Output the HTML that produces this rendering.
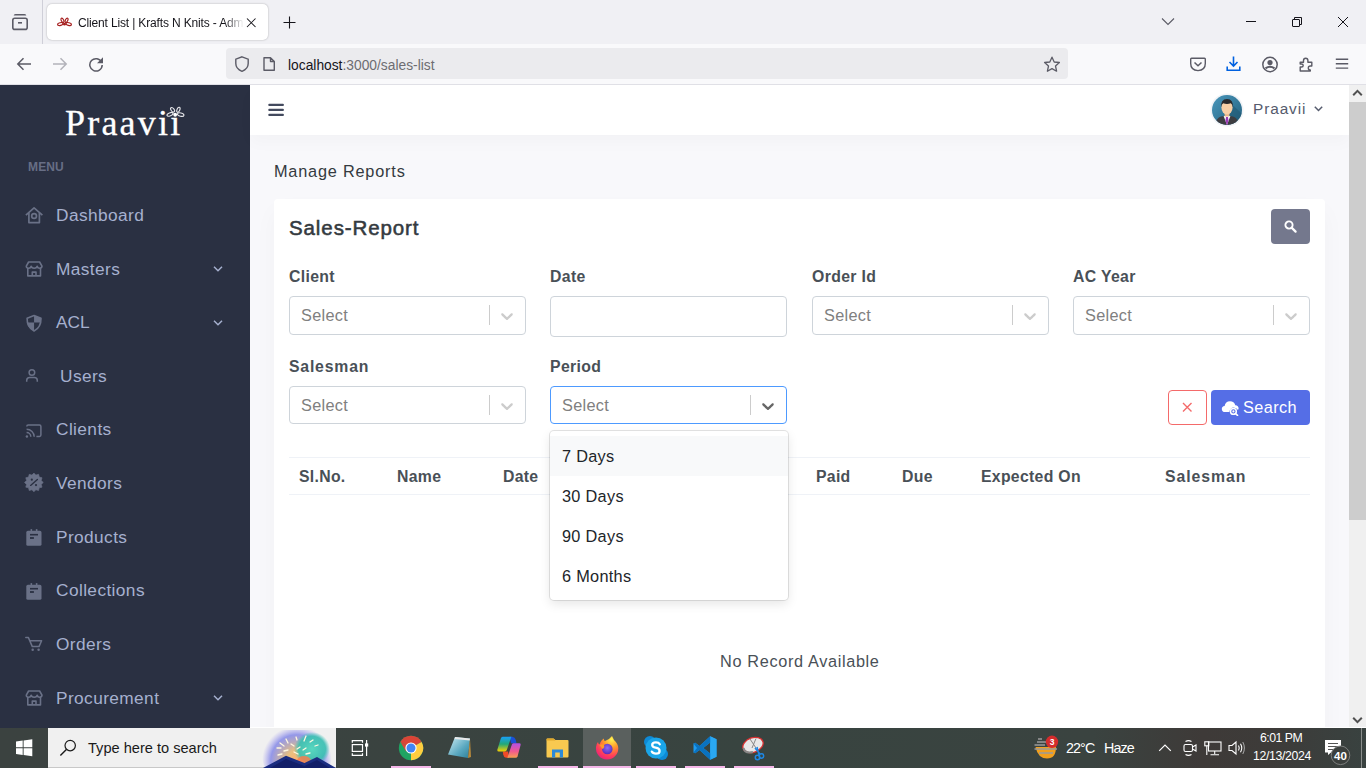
<!DOCTYPE html>
<html><head><meta charset="utf-8">
<style>
*{margin:0;padding:0;box-sizing:border-box}
html,body{width:1366px;height:768px;overflow:hidden;font-family:"Liberation Sans",sans-serif;background:#f8f8fb;position:relative}
.a{position:absolute}
#tabbar{left:0;top:0;width:1366px;height:44px;background:#f0f0f4}
#navbar{left:0;top:44px;width:1366px;height:41px;background:#f9f9fb;border-bottom:1px solid #e0e0e6}
#url{left:226px;top:48px;width:842px;height:31px;background:#ebebee;border-radius:4px}
#tab{left:47px;top:4px;width:221px;height:36px;background:#fff;border-radius:5px;box-shadow:0 0 2px rgba(0,0,0,.3)}
#sidebar{left:0;top:85px;width:250px;height:643px;background:#2a3042}
#header{left:250px;top:85px;width:1099px;height:50px;background:#fff;box-shadow:0 .5rem 1rem rgba(18,38,63,.025)}
#scroll{left:1349px;top:85px;width:17px;height:642px;background:#f0f0f0}
#thumb{left:1349px;top:102px;width:17px;height:418px;background:#cdcdcd}
#card{left:274px;top:199px;width:1051px;height:540px;background:#fff;border-radius:4px;box-shadow:0 .75rem 1.5rem rgba(18,38,63,.03)}
#taskbar{left:0;top:728px;width:1366px;height:40px;background:linear-gradient(90deg,#3b4240 0%,#3a4340 30%,#384440 55%,#3a4340 80%,#3e3a38 88%,#3d3b39 93%,#394240 100%)}
.mi{color:#a6b0cf;font-size:17.3px;left:56px;letter-spacing:.4px}
.lbl{color:#495057;font-size:15.8px;font-weight:bold;letter-spacing:.35px}
.sel{background:#fff;border:1px solid #ced4da;border-radius:4px;height:39px;width:237px}
.sel span{position:absolute;left:11px;top:9px;font-size:16.3px;color:#808080;letter-spacing:.3px}
.sel i{position:absolute;left:199px;top:8px;width:1px;height:20px;background:#cccccc}
.sel svg{position:absolute;left:207px;top:9px}
.foc{border-color:#4d9aff}
.th{font-size:15.8px;font-weight:bold;color:#495057;top:468px;letter-spacing:.3px}
.opt{left:562px;font-size:16.3px;color:#212529;letter-spacing:.3px}
</style></head><body>
<div id="tabbar" class="a"></div>
<div class="a" style="left:42px;top:0;width:1px;height:44px;background:#cfcfd8"></div>
<svg class="a" style="left:10px;top:12px" width="20" height="20" viewBox="0 0 20 20"><path d="M4.5 3.6Q4.5 2.8 5.5 2.8L14.5 2.8Q15.5 2.8 15.5 3.6" fill="none" stroke="#5b5b66" stroke-width="1.6"/><rect x="2.8" y="6.2" width="14.4" height="11.2" rx="2" fill="none" stroke="#5b5b66" stroke-width="1.6"/><path d="M8 10.8H12" stroke="#5b5b66" stroke-width="1.6"/></svg>
<div id="tab" class="a"></div>
<svg class="a" style="left:56px;top:17px" width="17" height="10" viewBox="0 0 18 12"><g fill="none" stroke="#a51d1d" stroke-width="1.4"><ellipse cx="4" cy="8.5" rx="3.3" ry="1.6" transform="rotate(-15 4 8.5)"/><ellipse cx="14" cy="8.5" rx="3.3" ry="1.6" transform="rotate(15 14 8.5)"/><ellipse cx="6.5" cy="4" rx="1.4" ry="2.8" transform="rotate(-25 6.5 4)"/><ellipse cx="11.5" cy="4" rx="1.4" ry="2.8" transform="rotate(25 11.5 4)"/></g><circle cx="9" cy="8.6" r="1.7" fill="#a51d1d"/></svg>
<div class="a" style="left:78px;top:16px;font-size:12px;color:#15141a;width:166px;overflow:hidden;white-space:nowrap;letter-spacing:-.15px;-webkit-mask-image:linear-gradient(90deg,#000 88%,transparent)">Client List | Krafts N Knits - Admin</div>
<svg class="a" style="left:245px;top:16px" width="12" height="12" viewBox="0 0 12 12"><path d="M2 2.5L10.5 11M10.5 2.5L2 11" stroke="#15141a" stroke-width="1.05"/></svg>
<svg class="a" style="left:282px;top:15px" width="15" height="15" viewBox="0 0 15 15"><path d="M7.5 1.5V13.5M1.5 7.5H13.5" stroke="#15141a" stroke-width="1.1"/></svg>
<svg class="a" style="left:1160px;top:16px" width="16" height="12" viewBox="0 0 16 12"><path d="M2 2.5L8 8.5L14 2.5" fill="none" stroke="#5b5b66" stroke-width="1.1"/></svg>
<div class="a" style="left:1246px;top:21px;width:10px;height:1px;background:#15141a"></div>
<svg class="a" style="left:1291px;top:16px" width="13" height="12" viewBox="0 0 13 12"><rect x="1.5" y="3.5" width="7" height="7" rx=".5" fill="none" stroke="#15141a" stroke-width="1"/><path d="M3.5 3.5V1.5H10.5V8.5H8.5" fill="none" stroke="#15141a" stroke-width="1"/></svg>
<svg class="a" style="left:1337px;top:16px" width="12" height="12" viewBox="0 0 12 12"><path d="M1 1L11 11M11 1L1 11" stroke="#15141a" stroke-width="1"/></svg>
<div id="navbar" class="a"></div>
<svg class="a" style="left:16px;top:56px" width="16" height="16" viewBox="0 0 16 16"><path d="M15 8H2.5M7.5 2.2L1.8 8L7.5 13.8" fill="none" stroke="#5b5b66" stroke-width="1.5"/></svg>
<svg class="a" style="left:52px;top:56px" width="16" height="16" viewBox="0 0 16 16"><path d="M1 8H13.5M8.5 2.2L14.2 8L8.5 13.8" fill="none" stroke="#b3b3ba" stroke-width="1.5"/></svg>
<svg class="a" style="left:88px;top:56px" width="16" height="16" viewBox="0 0 16 16"><path d="M13.6 6.2A6.2 6.2 0 1 0 14.2 9" fill="none" stroke="#5b5b66" stroke-width="1.5"/><path d="M15 1.2V7.2H9Z" fill="#5b5b66"/></svg>
<div id="url" class="a"></div>
<svg class="a" style="left:233px;top:55px" width="18" height="18" viewBox="0 0 18 18"><path d="M9 1.8L15.2 4.2V8.5Q15.2 13.8 9 16.3Q2.8 13.8 2.8 8.5V4.2Z" fill="none" stroke="#5b5b66" stroke-width="1.4"/></svg>
<svg class="a" style="left:261px;top:56px" width="16" height="16" viewBox="0 0 16 16"><path d="M3 1.7H9.5L13.3 5.5V14.3H3Z M9.5 1.7V5.5H13.3" fill="none" stroke="#5b5b66" stroke-width="1.4" stroke-linejoin="round"/></svg>
<div class="a" style="left:288px;top:58px;font-size:13.8px;color:#15141a">localhost<span style="color:#6d6d72">:3000/sales-list</span></div>
<svg class="a" style="left:1043px;top:56px" width="18" height="17" viewBox="0 0 18 17"><path d="M9 1.2L11.2 6L16.4 6.5L12.5 10L13.6 15.2L9 12.6L4.4 15.2L5.5 10L1.6 6.5L6.8 6Z" fill="none" stroke="#5b5b66" stroke-width="1.3" stroke-linejoin="round"/></svg>
<svg class="a" style="left:1189px;top:56px" width="18" height="16" viewBox="0 0 18 16"><path d="M2.5 2.2H15.5Q16.3 2.2 16.3 3V7.5Q16.3 14.2 9 14.6Q1.7 14.2 1.7 7.5V3Q1.7 2.2 2.5 2.2Z" fill="none" stroke="#5b5b66" stroke-width="1.4"/><path d="M5.5 6.5L9 9.8L12.5 6.5" fill="none" stroke="#5b5b66" stroke-width="1.5"/></svg>
<svg class="a" style="left:1225px;top:55px" width="17" height="17" viewBox="0 0 17 17"><path d="M8.5 1.5V11M4.5 7L8.5 11L12.5 7M2.2 11.5V15.2H14.8V11.5" fill="none" stroke="#0061e0" stroke-width="1.6"/></svg>
<svg class="a" style="left:1261px;top:56px" width="18" height="17" viewBox="0 0 18 17"><circle cx="9" cy="8.5" r="7.2" fill="none" stroke="#5b5b66" stroke-width="1.5"/><circle cx="9" cy="6.6" r="2.6" fill="#5b5b66"/><path d="M4.5 12.3Q9 9.2 13.5 12.3" fill="none" stroke="#5b5b66" stroke-width="2.2"/></svg>
<svg class="a" style="left:1298px;top:56px" width="17" height="17" viewBox="0 0 17 17"><path d="M2.2 6.2H5.5V4.5Q5.5 2.2 7.7 2.2Q9.9 2.2 9.9 4.5V6.2H13.8V10H12.3Q10.3 10 10.3 12T12.3 14V15H2.2V11H3.5Q5.2 11 5.2 9.5T3.5 8H2.2Z" fill="none" stroke="#5b5b66" stroke-width="1.4" stroke-linejoin="round"/></svg>
<svg class="a" style="left:1334px;top:56px" width="16" height="16" viewBox="0 0 16 16"><path d="M1.8 3.3H14.2M1.8 7.7H14.2M1.8 12.1H14.2" stroke="#5b5b66" stroke-width="1.4"/></svg>
<div id="sidebar" class="a"></div>
<div class="a" style="left:65px;top:102px;font-family:'Liberation Serif',serif;font-size:36px;color:#fff;letter-spacing:2.2px;-webkit-text-stroke:.3px #fff">Praavi<span style="position:relative">&#305;</span></div>
<svg class="a" style="left:150px;top:96px" width="45" height="45" viewBox="0 0 45 45"><g fill="none" stroke="#e6e6ea" stroke-width="1.1"><ellipse cx="22.6" cy="13.8" rx="1.5" ry="2.6" transform="rotate(-38 22.6 13.8)"/><ellipse cx="28.4" cy="13.8" rx="1.4" ry="2.7" transform="rotate(22 28.4 13.8)"/><ellipse cx="20" cy="18.3" rx="3.2" ry="1.5" transform="rotate(-22 20 18.3)"/><ellipse cx="30.7" cy="18.6" rx="3.3" ry="1.6" transform="rotate(12 30.7 18.6)"/></g><circle cx="25.2" cy="18.75" r="1.9" fill="#fff"/></svg>
<div class="a" style="left:28px;top:160px;font-size:12px;font-weight:bold;color:#676e85;letter-spacing:.15px">MENU</div>
<svg class="a" style="left:20px;top:200px" width="30" height="30" viewBox="0 0 30 30"><g fill="none" stroke="#6a7187" stroke-width="1.7" stroke-linejoin="round"><path d="M5.9 15.2L14.06 7.9L22.4 15.2"/><path d="M8.9 13V22.6H19.4V13"/><circle cx="14.1" cy="16" r="2.4"/></g></svg>
<svg class="a" style="left:20px;top:254px" width="30" height="30" viewBox="0 0 30 30"><g fill="none" stroke="#6a7187" stroke-width="1.6" stroke-linejoin="round"><path d="M8.6 8H19.6L22 12.2Q21.8 14.2 19.6 14.2Q17.4 14.2 17.2 12.2Q17 14.2 14.2 14.2Q11.4 14.2 11.2 12.2Q11 14.2 8.6 14.2Q6.4 14.2 6.3 12.2Z"/><path d="M7.8 14V21.9H20.5V14"/><path d="M12.3 21.9V18.1H16V21.9"/></g></svg>
<svg class="a" style="left:20px;top:308px" width="30" height="30" viewBox="0 0 30 30"><path d="M14.06 7.6L21 10.3Q21.2 19.5 14.06 23Q6.9 19.5 7.1 10.3Z" fill="none" stroke="#6a7187" stroke-width="1.6" stroke-linejoin="round"/><path d="M14.06 7.6L21 10.3Q21.1 12.5 20.9 14.6H14.06Z" fill="#6a7187"/><path d="M7.2 14.6H14.06V23Q7.3 19.5 7.2 14.6Z" fill="#6a7187"/></svg>
<svg class="a" style="left:20px;top:361px" width="30" height="30" viewBox="0 0 30 30"><g fill="none" stroke="#6a7187" stroke-width="1.5"><circle cx="11.9" cy="11.5" r="2.8"/><path d="M6.7 20.8V19.6Q6.7 16.6 9.7 16.6H14.3Q17.3 16.6 17.3 19.6V20.8"/></g></svg>
<svg class="a" style="left:20px;top:415px" width="30" height="30" viewBox="0 0 30 30"><g fill="none" stroke="#6a7187" stroke-width="1.5"><path d="M6.8 11.6V11.5Q6.8 10.1 8.2 10.1H19.5Q20.9 10.1 20.9 11.5V20Q20.9 21.4 19.5 21.4H16.4"/><path d="M6.6 14.2A7.6 7.6 0 0 1 14.2 21.8"/><path d="M6.6 17.6A4.2 4.2 0 0 1 10.8 21.8"/></g><circle cx="6.9" cy="21.5" r="1.2" fill="#6a7187"/></svg>
<svg class="a" style="left:20px;top:468px" width="30" height="30" viewBox="0 0 30 30"><polygon points="13.90,5.05 15.87,7.11 18.60,6.31 19.27,9.08 22.04,9.75 21.24,12.48 23.30,14.45 21.24,16.42 22.04,19.15 19.27,19.82 18.60,22.59 15.87,21.79 13.90,23.85 11.93,21.79 9.20,22.59 8.53,19.82 5.76,19.15 6.56,16.42 4.50,14.45 6.56,12.48 5.76,9.75 8.53,9.08 9.20,6.31 11.93,7.11" fill="#6a7187" stroke="#6a7187" stroke-width=".6" stroke-linejoin="round"/><path d="M10.6 17.4L17.4 11.4" stroke="#2a3042" stroke-width="1.3" stroke-linecap="round"/><circle cx="11.8" cy="11.7" r="1.1" fill="#2a3042"/><circle cx="16" cy="17.1" r="1.1" fill="#2a3042"/></svg>
<svg class="a" style="left:20px;top:522px" width="30" height="30" viewBox="0 0 30 30"><rect x="6.3" y="8.8" width="15.2" height="15" rx="1.6" fill="#6a7187"/><rect x="10.6" y="6.9" width="1.5" height="3" rx=".7" fill="#6a7187"/><rect x="15.9" y="6.9" width="1.5" height="3" rx=".7" fill="#6a7187"/><rect x="10" y="11.9" width="8" height="1.6" fill="#2a3042"/><rect x="10" y="15.1" width="3.9" height="1.8" fill="#2a3042"/></svg>
<svg class="a" style="left:20px;top:576px" width="30" height="30" viewBox="0 0 30 30"><rect x="6.3" y="8.8" width="15.2" height="15" rx="1.6" fill="#6a7187"/><rect x="10.6" y="6.9" width="1.5" height="3" rx=".7" fill="#6a7187"/><rect x="15.9" y="6.9" width="1.5" height="3" rx=".7" fill="#6a7187"/><rect x="10" y="11.9" width="8" height="1.6" fill="#2a3042"/><rect x="10" y="15.1" width="3.9" height="1.8" fill="#2a3042"/></svg>
<svg class="a" style="left:20px;top:629px" width="30" height="30" viewBox="0 0 30 30"><g fill="none" stroke="#6a7187" stroke-width="1.5" stroke-linejoin="round" stroke-linecap="round"><path d="M5.8 8.4H8.3L12.3 17.6H19L21.6 11.7H10.3"/></g><circle cx="12.7" cy="20.7" r="1.25" fill="#6a7187"/><circle cx="18.6" cy="20.7" r="1.25" fill="#6a7187"/></svg>
<svg class="a" style="left:20px;top:683px" width="30" height="30" viewBox="0 0 30 30"><g fill="none" stroke="#6a7187" stroke-width="1.6" stroke-linejoin="round"><path d="M8.6 8H19.6L22 12.2Q21.8 14.2 19.6 14.2Q17.4 14.2 17.2 12.2Q17 14.2 14.2 14.2Q11.4 14.2 11.2 12.2Q11 14.2 8.6 14.2Q6.4 14.2 6.3 12.2Z"/><path d="M7.8 14V21.9H20.5V14"/><path d="M12.3 21.9V18.1H16V21.9"/></g></svg>
<svg class="a" style="left:212px;top:265px" width="12" height="8" viewBox="0 0 12 8"><path d="M2 1.8L6 5.8L10 1.8" fill="none" stroke="#a6b0cf" stroke-width="1.5"/></svg>
<svg class="a" style="left:212px;top:319px" width="12" height="8" viewBox="0 0 12 8"><path d="M2 1.8L6 5.8L10 1.8" fill="none" stroke="#a6b0cf" stroke-width="1.5"/></svg>
<svg class="a" style="left:212px;top:694px" width="12" height="8" viewBox="0 0 12 8"><path d="M2 1.8L6 5.8L10 1.8" fill="none" stroke="#a6b0cf" stroke-width="1.5"/></svg>
<div class="a mi" style="top:205px">Dashboard</div>
<div class="a mi" style="top:259px">Masters</div>
<div class="a mi" style="top:312px;letter-spacing:0">ACL</div>
<div class="a mi" style="top:366px;left:60px">Users</div>
<div class="a mi" style="top:419px">Clients</div>
<div class="a mi" style="top:473px">Vendors</div>
<div class="a mi" style="top:527px">Products</div>
<div class="a mi" style="top:580px">Collections</div>
<div class="a mi" style="top:634px">Orders</div>
<div class="a mi" style="top:688px">Procurement</div>
<div id="header" class="a"></div>
<svg class="a" style="left:268px;top:102px" width="16" height="16" viewBox="0 0 16 16"><path d="M1.3 2.9H14.9M1.3 7.9H14.9M1.3 12.9H14.9" stroke="#434a5e" stroke-width="2.1" stroke-linecap="round"/></svg>
<svg class="a" style="left:1209px;top:92px" width="36" height="36" viewBox="0 0 36 36">
<defs><linearGradient id="av" x1="0" y1="0" x2="1" y2="1"><stop offset="0" stop-color="#4a98bd"/><stop offset="1" stop-color="#235f7c"/></linearGradient><clipPath id="avc"><circle cx="18" cy="18" r="15"/></clipPath></defs>
<circle cx="18" cy="18" r="16.6" fill="#f1f3f6"/>
<circle cx="18" cy="18" r="15" fill="url(#av)"/>
<g clip-path="url(#avc)">
<path d="M18 8 L40 28 L40 40 L22 40Z" fill="#1d546e" opacity=".5"/>
<path d="M5 38 Q6 26.5 12 24.6 L18 23.4 L24 24.6 Q30 26.5 31 38Z" fill="#3d3d41"/>
<path d="M14.6 24 L18 33 L21.4 24 Z" fill="#fff"/>
<path d="M17 25 H19 L19.5 28.5 L18 34 L16.5 28.5Z" fill="#9c3cb8"/>
<rect x="15.6" y="19.5" width="4.8" height="5" fill="#eab68a"/>
<ellipse cx="18" cy="15.6" rx="5.6" ry="6.8" fill="#f8cfa6"/>
<path d="M12.2 15.5 Q11.4 7 18 6.9 Q24.6 7 23.8 15.5 Q23.4 11.8 21.8 11.2 Q18 12.6 14.2 11.2 Q12.6 11.8 12.2 15.5Z" fill="#2a2a2d"/>
</g></svg>
<div class="a" style="left:1253px;top:100px;font-size:15.4px;color:#555b6d;letter-spacing:.9px">Praavii</div>
<svg class="a" style="left:1313px;top:105px" width="11" height="8" viewBox="0 0 11 8"><path d="M1.8 1.8L5.5 5.5L9.2 1.8" fill="none" stroke="#555b6d" stroke-width="1.5"/></svg>

<div class="a" style="left:274px;top:162px;font-size:16.3px;color:#343a40;letter-spacing:.8px">Manage Reports</div>

<div id="card" class="a"></div>
<div class="a" style="left:289px;top:216px;font-size:20.5px;color:#343a40;letter-spacing:.9px;-webkit-text-stroke:.55px #343a40">Sales-Report</div>
<div class="a" style="left:1271px;top:209px;width:39px;height:35px;background:#74788d;border-radius:4px"></div>
<svg class="a" style="left:1283px;top:219px" width="15" height="15" viewBox="0 0 15 15"><circle cx="6" cy="6" r="3.6" fill="none" stroke="#fff" stroke-width="1.9"/><path d="M8.6 8.6L12.6 12.6" stroke="#fff" stroke-width="2.2" stroke-linecap="round"/></svg>

<div class="a lbl" style="left:289px;top:268px">Client</div>
<div class="a lbl" style="left:550px;top:268px">Date</div>
<div class="a lbl" style="left:812px;top:268px">Order Id</div>
<div class="a lbl" style="left:1073px;top:268px">AC Year</div>
<div class="a lbl" style="left:289px;top:358px;letter-spacing:.8px">Salesman</div>
<div class="a lbl" style="left:550px;top:358px">Period</div>

<div class="a sel" style="left:289px;top:296px"><span>Select</span><i></i><svg width="20" height="20" viewBox="0 0 20 20"><path fill="#ccc" d="M4.516 7.548c0.436-0.446 1.043-0.481 1.576 0l3.908 3.747 3.908-3.747c0.533-0.481 1.141-0.446 1.574 0 0.436 0.445 0.408 1.197 0 1.615-0.406 0.418-4.695 4.502-4.695 4.502-0.217 0.223-0.502 0.335-0.787 0.335s-0.57-0.112-0.789-0.335c0 0-4.287-4.084-4.695-4.502s-0.436-1.17 0-1.615z"/></svg></div>
<div class="a sel" style="left:550px;top:296px;height:41px"></div>
<div class="a sel" style="left:812px;top:296px"><span>Select</span><i></i><svg width="20" height="20" viewBox="0 0 20 20"><path fill="#ccc" d="M4.516 7.548c0.436-0.446 1.043-0.481 1.576 0l3.908 3.747 3.908-3.747c0.533-0.481 1.141-0.446 1.574 0 0.436 0.445 0.408 1.197 0 1.615-0.406 0.418-4.695 4.502-4.695 4.502-0.217 0.223-0.502 0.335-0.787 0.335s-0.57-0.112-0.789-0.335c0 0-4.287-4.084-4.695-4.502s-0.436-1.17 0-1.615z"/></svg></div>
<div class="a sel" style="left:1073px;top:296px"><span>Select</span><i></i><svg width="20" height="20" viewBox="0 0 20 20"><path fill="#ccc" d="M4.516 7.548c0.436-0.446 1.043-0.481 1.576 0l3.908 3.747 3.908-3.747c0.533-0.481 1.141-0.446 1.574 0 0.436 0.445 0.408 1.197 0 1.615-0.406 0.418-4.695 4.502-4.695 4.502-0.217 0.223-0.502 0.335-0.787 0.335s-0.57-0.112-0.789-0.335c0 0-4.287-4.084-4.695-4.502s-0.436-1.17 0-1.615z"/></svg></div>
<div class="a sel" style="left:289px;top:386px;height:38px"><span>Select</span><i></i><svg width="20" height="20" viewBox="0 0 20 20"><path fill="#ccc" d="M4.516 7.548c0.436-0.446 1.043-0.481 1.576 0l3.908 3.747 3.908-3.747c0.533-0.481 1.141-0.446 1.574 0 0.436 0.445 0.408 1.197 0 1.615-0.406 0.418-4.695 4.502-4.695 4.502-0.217 0.223-0.502 0.335-0.787 0.335s-0.57-0.112-0.789-0.335c0 0-4.287-4.084-4.695-4.502s-0.436-1.17 0-1.615z"/></svg></div>
<div class="a sel foc" style="left:550px;top:386px;height:38px"><span>Select</span><i></i><svg width="20" height="20" viewBox="0 0 20 20"><path fill="#666" d="M4.516 7.548c0.436-0.446 1.043-0.481 1.576 0l3.908 3.747 3.908-3.747c0.533-0.481 1.141-0.446 1.574 0 0.436 0.445 0.408 1.197 0 1.615-0.406 0.418-4.695 4.502-4.695 4.502-0.217 0.223-0.502 0.335-0.787 0.335s-0.57-0.112-0.789-0.335c0 0-4.287-4.084-4.695-4.502s-0.436-1.17 0-1.615z"/></svg></div>

<div class="a" style="left:1168px;top:390px;width:39px;height:35px;border:1px solid #f46a6a;border-radius:4px"></div>
<svg class="a" style="left:1181px;top:401px" width="12" height="12" viewBox="0 0 12 12"><path d="M2 2L10.5 10.5M10.5 2L2 10.5" stroke="#f46a6a" stroke-width="1.4"/></svg>
<div class="a" style="left:1211px;top:390px;width:99px;height:35px;background:#556ee6;border-radius:4px"></div>
<svg class="a" style="left:1221px;top:399px" width="19" height="17" viewBox="0 0 19 17"><path d="M4.2 13Q0.8 13 0.8 9.9Q0.8 7.2 3.6 6.9Q4.4 2.2 9 2.2Q13.2 2.2 14.3 6.3Q17.6 6.7 17.6 9.8L17 11Q15.5 8.5 12.5 8.5Q9.3 8.5 8.3 13Z" fill="#fff"/><circle cx="12.4" cy="12.4" r="2.9" fill="none" stroke="#fff" stroke-width="1.5"/><circle cx="12.4" cy="12.4" r="1.1" fill="#fff"/><path d="M14.5 14.5L16.5 16.4" stroke="#fff" stroke-width="1.6" stroke-linecap="round"/></svg>
<div class="a" style="left:1243px;top:398px;font-size:16.3px;color:#fff;letter-spacing:.4px">Search</div>

<div class="a" style="left:289px;top:457px;width:1021px;height:1px;background:#eff2f7"></div>
<div class="a" style="left:289px;top:494px;width:1021px;height:1px;background:#eff2f7"></div>
<div class="a th" style="left:299px">Sl.No.</div>
<div class="a th" style="left:397px">Name</div>
<div class="a th" style="left:503px">Date</div>
<div class="a th" style="left:816px">Paid</div>
<div class="a th" style="left:902px">Due</div>
<div class="a th" style="left:981px">Expected On</div>
<div class="a th" style="left:1165px;letter-spacing:.95px">Salesman</div>

<div class="a" style="left:550px;top:431px;width:238px;height:169px;background:#fff;border-radius:4px;box-shadow:0 0 0 1px rgba(0,0,0,.1),0 4px 11px rgba(0,0,0,.1)"></div>
<div class="a" style="left:550px;top:436px;width:238px;height:40px;background:#f8f9fa"></div>
<div class="a opt" style="top:447px">7 Days</div>
<div class="a opt" style="top:487px">30 Days</div>
<div class="a opt" style="top:527px">90 Days</div>
<div class="a opt" style="top:567px">6 Months</div>

<div class="a" style="left:720px;top:652px;font-size:16.3px;color:#495057;letter-spacing:.65px">No Record Available</div>
<div id="scroll" class="a"></div>
<div id="thumb" class="a"></div>
<svg class="a" style="left:1349px;top:86px" width="17" height="14" viewBox="0 0 17 14"><path d="M4.2 9.2L8.5 4.9L12.8 9.2" fill="none" stroke="#505050" stroke-width="2"/></svg>
<svg class="a" style="left:1349px;top:713px" width="17" height="14" viewBox="0 0 17 14"><path d="M4.2 4.8L8.5 9.1L12.8 4.8" fill="none" stroke="#505050" stroke-width="2"/></svg>
<div class="a" style="left:250px;top:727px;width:1116px;height:1px;background:#fff"></div>
<div id="taskbar" class="a"></div>
<svg class="a" style="left:15px;top:739px" width="18" height="18" viewBox="0 0 18 18"><path d="M1 2.6L7.7 1.6V8.3H1Z M8.6 1.5L17.3 0.3V8.3H8.6Z M1 9.2H7.7V15.9L1 15Z M8.6 9.2H17.3V17.3L8.6 16.1Z" fill="#fff"/></svg>
<div class="a" style="left:48px;top:728px;width:288px;height:40px;background:#f0f0f0;border-bottom:1px solid #c8c8c8"></div>
<svg class="a" style="left:59px;top:739px" width="18" height="18" viewBox="0 0 18 18"><circle cx="11.2" cy="6.6" r="5.2" fill="none" stroke="#1a1a1a" stroke-width="1.2"/><path d="M7.4 10.4L1.4 16.4" stroke="#1a1a1a" stroke-width="1.4"/></svg>
<div class="a" style="left:88px;top:740px;font-size:14.6px;color:#1a1a1a">Type here to search</div>
<svg class="a" style="left:260px;top:730px" width="76" height="38" viewBox="0 0 76 38">
<defs><radialGradient id="gw" cx=".5" cy=".6" r=".5"><stop offset="0" stop-color="#ffb070"/><stop offset=".3" stop-color="#e8c080"/><stop offset=".75" stop-color="#8a8ee8" stop-opacity=".9"/><stop offset="1" stop-color="#a8a0f0" stop-opacity="0"/></radialGradient>
<radialGradient id="gt" cx=".5" cy=".5" r=".5"><stop offset="0" stop-color="#58d8c0"/><stop offset=".75" stop-color="#38c0b0" stop-opacity=".9"/><stop offset="1" stop-color="#40c8b8" stop-opacity="0"/></radialGradient></defs>
<circle cx="37" cy="24" r="35" fill="url(#gw)"/>
<ellipse cx="52" cy="19" rx="18" ry="17" fill="url(#gt)"/>
<ellipse cx="44" cy="31" rx="7" ry="5" fill="#ff7a48" opacity=".8"/>
<g stroke="#fff8e0" stroke-width="1.3" stroke-linecap="round"><path d="M20 13L24 16M26 9L28 13M36 7L37 10M46 6L44 11M53 10L50 12M58 15L55 16M17 18L21 18M18 25L22 24M24 21L28 20M31 14L34 16M40 17L37 19M46 18L43 20M50 23L46 24M34 22L38 24"/></g>
<path d="M3 38L26 25.8L44.5 33L57 27L76 38Z" fill="#1a2c80"/>
<path d="M10 38L26 29L44.5 36L57 30L70 38Z" fill="#121e68"/>
</svg>
<svg class="a" style="left:350px;top:739px" width="20" height="18" viewBox="0 0 20 18"><g fill="none" stroke="#fff" stroke-width="1.2"><path d="M2.3 3.8V1.6H12.5V3.8M2.3 14.2V16.4H12.5V14.2"/><rect x="2.3" y="5.6" width="10.2" height="6.8"/><path d="M16.6 1V17"/></g><rect x="15" y="4.4" width="3.2" height="3.2" fill="#fff"/></svg>

<svg class="a" style="left:398px;top:735px" width="26" height="26" viewBox="0 0 26 26"><circle cx="13" cy="13" r="12.2" fill="#1fa463"/><path d="M13 13L2.4 6.9A12.2 12.2 0 0 1 23.6 6.9Z" fill="#db4437"/><path d="M13 13L23.6 6.9A12.2 12.2 0 0 1 13 25.2Z" fill="#ffcd40"/><path d="M13 13L2.4 6.9L8 16.3Z" fill="#db4437"/><path d="M13 13H23.6L13 25.2L18 16Z" fill="#ffcd40"/><circle cx="13" cy="13" r="5.6" fill="#fff"/><circle cx="13" cy="13" r="4.5" fill="#4285f4"/></svg>
<div class="a" style="left:391px;top:766px;width:40px;height:2px;background:#f4b6e8"></div>
<svg class="a" style="left:446px;top:735px" width="26" height="26" viewBox="0 0 26 26"><defs><linearGradient id="np" x1="0" y1="0" x2="1" y2="1"><stop offset="0" stop-color="#cfeef5"/><stop offset=".6" stop-color="#5aa8c0"/><stop offset="1" stop-color="#2d7f98"/></linearGradient></defs><path d="M9 2L24 3.5L22 23L2 19.5Z" fill="url(#np)"/><path d="M9 2L24 3.5L23.8 5.5L8.6 4Z" fill="#e8e8e8"/><path d="M22 23L24 3.5L25 22Z" fill="#b88a3c"/></svg>
<svg class="a" style="left:490px;top:730px" width="40" height="35" viewBox="0 0 40 35"><defs>
<linearGradient id="cpa" x1="0" y1="0" x2="0" y2="1"><stop offset="0" stop-color="#18a0f8"/><stop offset=".5" stop-color="#22a878"/><stop offset="1" stop-color="#f8d200"/></linearGradient>
<linearGradient id="cpb" x1="0" y1="0" x2="0" y2="1"><stop offset="0" stop-color="#b050e8"/><stop offset=".55" stop-color="#f05890"/><stop offset="1" stop-color="#f8a050"/></linearGradient></defs>
<path d="M19.6 6.8H22.5Q25 7 25.8 10L26.5 13.2H21Z" fill="#1a50d8"/>
<path d="M12.8 21.4H18L19.2 27.8H16Q13.8 27.6 13.2 24.5Z" fill="#f04a28"/>
<path d="M12.6 6.8H21.4L16.8 20Q16.3 21.4 14.8 21.4H8.8Q7 21.4 7.4 19.6L10.8 8.6Q11.3 6.8 12.6 6.8Z" fill="url(#cpa)"/>
<path d="M23.8 13.2H29.3Q31 13.2 30.6 15L27.6 26.2Q27.1 27.8 25.6 27.8H17.3L21.9 14.6Q22.4 13.2 23.8 13.2Z" fill="url(#cpb)"/>
</svg>
<svg class="a" style="left:546px;top:738px" width="23" height="20" viewBox="0 0 23 20"><path d="M0.5 1.5Q0.5 0.5 1.5 0.5H7.5L9.5 2H21.5Q22.5 2 22.5 3V18.5Q22.5 19.5 21.5 19.5H1.5Q0.5 19.5 0.5 18.5Z" fill="#f8c950"/><path d="M0.5 1.5Q0.5 0.5 1.5 0.5H7.5L9.5 2.5H0.5Z" fill="#e0a82a"/><path d="M6 19.5V11.5H17V19.5H13.8V14.5H9.2V19.5Z" fill="#2c8ad8"/></svg>
<div class="a" style="left:538px;top:766px;width:40px;height:2px;background:#f4b6e8"></div>
<div class="a" style="left:583px;top:728px;width:48px;height:40px;background:#5a605e"></div>
<svg class="a" style="left:594px;top:735px" width="26" height="26" viewBox="0 0 26 26"><defs><radialGradient id="ff" cx=".7" cy=".15" r="1"><stop offset="0" stop-color="#fff44f"/><stop offset=".35" stop-color="#ff9a2a"/><stop offset=".7" stop-color="#ff3d5a"/><stop offset="1" stop-color="#e31587"/></radialGradient><radialGradient id="fp" cx=".5" cy=".4" r=".6"><stop offset="0" stop-color="#8a6cf7"/><stop offset="1" stop-color="#5a2bb8"/></radialGradient></defs><path d="M13 24.5A11.3 11.3 0 0 1 2 12Q2.5 8.5 4 7Q4.3 9 5.5 9.5Q7 5 10 3.5Q9.5 5.5 11 6Q16 4 18 1Q19 3 20 5Q24.3 9 24.3 13.2A11.3 11.3 0 0 1 13 24.5Z" fill="url(#ff)"/><circle cx="13.3" cy="14" r="5.3" fill="url(#fp)"/><path d="M5.5 10Q8 8.5 10 10Q11 12.5 8.5 14Z" fill="#ff9a2a"/></svg>
<div class="a" style="left:583px;top:766px;width:48px;height:2px;background:#f4b6e8"></div>
<svg class="a" style="left:643px;top:735px" width="26" height="26" viewBox="0 0 26 26"><circle cx="7" cy="7" r="6" fill="#0d8ad6"/><circle cx="19" cy="19" r="6" fill="#0d8ad6"/><circle cx="13" cy="13" r="10.5" fill="#1aa5e8"/><path d="M16.8 9.2Q15.8 7.4 12.9 7.4Q9.2 7.4 9.2 10Q9.2 12 12.6 12.6Q16.6 13.3 16.6 15.9Q16.6 18.6 12.9 18.6Q9.8 18.6 8.8 16.6" fill="none" stroke="#fff" stroke-width="2.3" stroke-linecap="round"/></svg>
<div class="a" style="left:636px;top:766px;width:40px;height:2px;background:#f4b6e8"></div>
<svg class="a" style="left:692px;top:735px" width="26" height="26" viewBox="0 0 26 26"><path d="M18.2 1.2L24.5 4.2V21.8L18.2 24.8L7.5 15L3.2 18.3L1.5 17.4V8.6L3.2 7.7L7.5 11L18.2 1.2ZM18.2 7.5L11.3 13L18.2 18.5Z" fill="#1f9cf0"/><path d="M18.2 1.2L24.5 4.2V21.8L18.2 24.8Z" fill="#2aa8f2"/><path d="M18.2 1.2L7.5 11L3.2 7.7L1.5 8.6L5 13L1.5 17.4L3.2 18.3L7.5 15L18.2 24.8V18.5L11.3 13L18.2 7.5Z" fill="#0a72c0"/></svg>
<div class="a" style="left:685px;top:766px;width:40px;height:2px;background:#f4b6e8"></div>
<svg class="a" style="left:741px;top:735px" width="26" height="26" viewBox="0 0 26 26"><ellipse cx="12" cy="10" rx="10.5" ry="7.2" transform="rotate(-20 12 10)" fill="#e8e8e8" stroke="#d83030" stroke-width="1.3"/><path d="M2.5 13Q4 19 12 17" fill="none" stroke="#888" stroke-width="2"/><path d="M9 4L15 13M15 3.5L11 13" stroke="#888" stroke-width="1"/><g fill="none" stroke="#1e88e5" stroke-width="1.5"><path d="M14 13L19 19M16 12L18 20"/><circle cx="20.5" cy="21" r="2.2"/><circle cx="16.5" cy="22.5" r="2.2"/></g></svg>
<div class="a" style="left:734px;top:766px;width:40px;height:2px;background:#f4b6e8"></div>

<svg class="a" style="left:1034px;top:735px" width="26" height="25" viewBox="0 0 26 25"><path d="M1.5 12H22Q22 23.5 13 23.5Q4 23.5 1.5 12Z" fill="#f2a01e"/><g stroke="#9a9a9a" stroke-width="1.6"><path d="M4 4H8M3 7H12M0.5 10H11M0.5 14H23M5 18H19"/></g><circle cx="18" cy="6.8" r="6.2" fill="#d42c2c"/><text x="18" y="9.8" font-size="8.5" font-weight="bold" fill="#fff" text-anchor="middle" font-family="Liberation Sans">3</text></svg>
<div class="a" style="left:1066px;top:740px;font-size:14.3px;color:#fff;letter-spacing:-.9px">22°C</div>
<div class="a" style="left:1104px;top:740px;font-size:14.3px;color:#fff;letter-spacing:-.9px">Haze</div>
<svg class="a" style="left:1158px;top:743px" width="14" height="9" viewBox="0 0 14 9"><path d="M1.2 7.8L7 2L12.8 7.8" fill="none" stroke="#fff" stroke-width="1.2"/></svg>
<svg class="a" style="left:1183px;top:739px" width="14" height="18" viewBox="0 0 14 18"><g fill="none" stroke="#fff" stroke-width="1.1"><path d="M2.5 2.5Q5.5 0.8 8.5 2.5M2.5 15.5Q5.5 17.2 8.5 15.5"/><rect x="1" y="5.5" width="8.5" height="7" rx="1.5"/><path d="M9.5 8L13 6V12L9.5 10"/></g></svg>
<svg class="a" style="left:1204px;top:741px" width="18" height="15" viewBox="0 0 18 15"><g fill="none" stroke="#fff" stroke-width="1.1"><rect x="4.5" y="1" width="12.5" height="9"/><path d="M10.7 10V13M6.5 13.7H15"/><rect x="0.8" y="0.8" width="4" height="4"/><path d="M2.8 4.8V14"/></g></svg>
<svg class="a" style="left:1228px;top:740px" width="18" height="16" viewBox="0 0 18 16"><g fill="none" stroke="#fff" stroke-width="1.1"><path d="M1 5.5H4L8 2V14L4 10.5H1Z"/><path d="M10.5 5.5Q12 8 10.5 10.5M12.5 3.8Q15 8 12.5 12.2"/></g><path d="M14.8 2Q18 8 14.8 14" fill="none" stroke="#aaa" stroke-width="1"/></svg>
<div class="a" style="left:1260px;top:731px;font-size:12.3px;color:#fff;letter-spacing:-.5px">6:01 PM</div>
<div class="a" style="left:1253px;top:749px;font-size:12.3px;color:#fff;letter-spacing:-.35px">12/13/2024</div>
<svg class="a" style="left:1323px;top:738px" width="30" height="28" viewBox="0 0 30 28"><path d="M2 2H18V14.5H8L5 17V14.5H2Z" fill="#fff"/><path d="M5 5.5H15M5 8.5H15M5 11.5H13" stroke="#555" stroke-width="1"/><circle cx="17.5" cy="17.3" r="9.3" fill="#3b3f3d" stroke="#7d7f7e" stroke-width="1"/><text x="17.5" y="21.6" font-size="11.5" font-weight="bold" fill="#fff" text-anchor="middle" font-family="Liberation Sans">40</text></svg>
<div class="a" style="left:1361px;top:728px;width:1px;height:40px;background:#8a8e8c"></div>
</body></html>
